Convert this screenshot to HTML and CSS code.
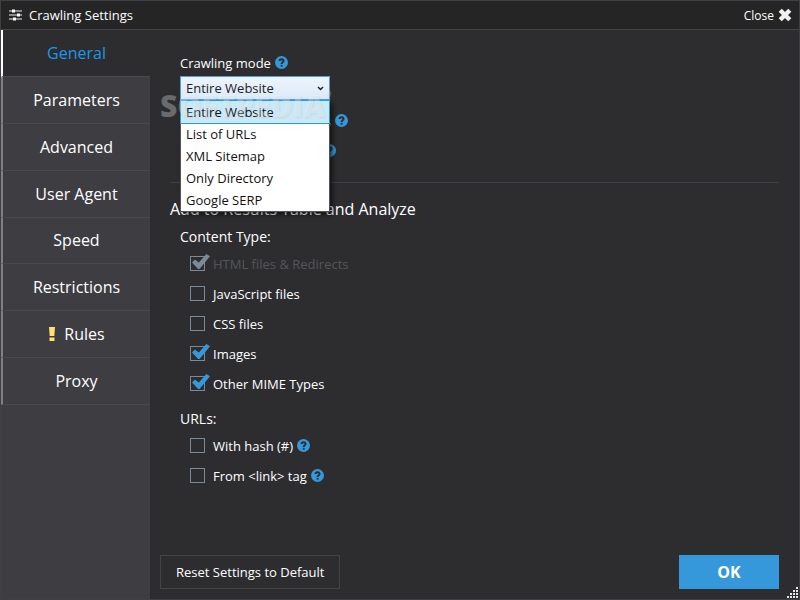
FILE: index.html
```html
<!DOCTYPE html>
<html lang="en">

<head>
  <meta charset="UTF-8">
  <title>Crawling Settings</title>
  <link rel="stylesheet" href="styles.css">
</head>

<body>
<svg class="sprite" aria-hidden="true">
  <symbol id="help" viewBox="0 0 12 12">
    <circle cx="6" cy="6" r="6" fill="#3498db"/>
    <path d="M4.2 4.6C4.2 2.4 7.9 2.4 7.9 4.5C7.9 5.8 6.1 5.7 6.1 7.3" fill="none" stroke="#2d2d30" stroke-width="1.8"/>
    <rect x="5.2" y="8.2" width="1.8" height="1.6" fill="#2d2d30"/>
  </symbol>
</svg>
<div class="window">
  <header class="titlebar">
    <h1>
      <svg width="13" height="12" viewBox="0 0 13 12" aria-hidden="true">
        <path d="M0 2H13M0 6H13M0 10H13" stroke="#eee" stroke-width="1.2"/>
        <path d="M3 .5h3v3h-3zM8 4.5h3v3h-3zM4 8.5h3v3h-3z" fill="#fff"/>
      </svg>
      Crawling Settings
    </h1>
    <button type="button" class="close">
      Close
      <svg width="14" height="14" viewBox="0 0 14 14" aria-hidden="true">
        <path d="M2.2 2.2L11.8 11.8M11.8 2.2L2.2 11.8" stroke="#f1f1f1" stroke-width="4.4"/>
      </svg>
    </button>
  </header>

  <div class="body">
    <nav class="side">
      <ul>
        <li><a href="#general" class="cur">General</a></li>
        <li><a href="#parameters">Parameters</a></li>
        <li><a href="#advanced">Advanced</a></li>
        <li><a href="#user-agent">User Agent</a></li>
        <li><a href="#speed">Speed</a></li>
        <li><a href="#restrictions">Restrictions</a></li>
        <li>
          <a href="#rules">
            <svg width="8" height="14" viewBox="0 0 8 14" aria-hidden="true">
              <path d="M1 0h6l-.7 9h-4.6zM1.5 10.5h5v3.5h-5z" fill="#ffe070"/>
            </svg>
            Rules
          </a>
        </li>
        <li><a href="#proxy">Proxy</a></li>
      </ul>
    </nav>

    <main class="content">
      <section class="mode">
        <div class="mode-title">
          <label for="mode">Crawling mode</label>
          <svg class="help"><use href="#help"/></svg>
        </div>
        <div class="dropdown">
          <select id="mode">
            <option>Entire Website</option>
            <option>List of URLs</option>
            <option>XML Sitemap</option>
            <option>Only Directory</option>
            <option>Google SERP</option>
          </select>
          <svg class="arrow" width="7" height="5" viewBox="0 0 7 5" aria-hidden="true">
            <path d="M1 1L3.5 3.5L6 1" fill="none" stroke="#222" stroke-width="1.5"/>
          </svg>
          <ul class="menu" role="listbox" aria-label="Crawling mode">
            <li role="option" aria-selected="true" class="cur">Entire Website</li>
            <li role="option">List of URLs</li>
            <li role="option">XML Sitemap</li>
            <li role="option">Only Directory</li>
            <li role="option">Google SERP</li>
          </ul>
          <span class="watermark">SOFTPEDIA<sup>®</sup></span>
        </div>
        <div class="checks">
          <div class="row">
            <label><input type="checkbox">Follow Subdomains</label>
            <svg class="help"><use href="#help"/></svg>
          </div>
          <div class="row">
            <label><input type="checkbox">Check Directories</label>
            <svg class="help"><use href="#help"/></svg>
          </div>
        </div>
      </section>

      <section class="results">
        <h2>Add to Results Table and Analyze</h2>
        <h3>Content Type:</h3>
        <div class="checks">
          <div class="row"><label class="off"><input type="checkbox" checked disabled>HTML files &amp; Redirects</label></div>
          <div class="row"><label><input type="checkbox">JavaScript files</label></div>
          <div class="row"><label><input type="checkbox">CSS files</label></div>
          <div class="row"><label><input type="checkbox" checked>Images</label></div>
          <div class="row"><label><input type="checkbox" checked>Other MIME Types</label></div>
        </div>
        <h3>URLs:</h3>
        <div class="checks">
          <div class="row">
            <label><input type="checkbox">With hash (#)</label>
            <svg class="help"><use href="#help"/></svg>
          </div>
          <div class="row">
            <label><input type="checkbox">From &lt;link&gt; tag</label>
            <svg class="help"><use href="#help"/></svg>
          </div>
        </div>
      </section>

      <footer class="actions">
        <button type="button" class="reset">Reset Settings to Default</button>
        <button type="button" class="ok">OK</button>
      </footer>
    </main>
  </div>
  <svg class="grip" width="12" height="12" viewBox="0 0 12 12" aria-hidden="true">
    <path d="M9 0h2v2h-2zM6 3h2v2h-2zM9 3h2v2h-2zM3 6h2v2h-2zM6 6h2v2h-2zM9 6h2v2h-2zM0 9h2v2h-2zM3 9h2v2h-2zM6 9h2v2h-2zM9 9h2v2h-2z" fill="#e6e6ee"/>
  </svg>
</div>
</body>

</html>
```
FILE: styles.css
```css
* {
  box-sizing: border-box;
  padding: 0;
  margin: 0;
}

body,
button,
select {
  font-family: "Open Sans", "Noto Sans", sans-serif;
  font-size: 13px;
  color: #fff;
}

ul {
  list-style: none;
}

button {
  border: 0;
  background: none;
  cursor: pointer;
}

.sprite {
  display: none;
}

.window {
  position: relative;
  display: flex;
  flex-direction: column;
  min-height: 100vh;
  border: 1px solid #3f3f46;
  background-color: #2d2d30;
}

.titlebar {
  display: flex;
  justify-content: space-between;
  align-items: center;
  height: 29px;
  padding: 0 7px 0 8px;
  border-bottom: 1px solid #434346;
  background-color: #252526;
}

.titlebar h1,
.close {
  display: flex;
  align-items: center;
  font-size: 13px;
  font-weight: normal;
}

.titlebar h1 {
  gap: 7px;
}

.close {
  gap: 4px;
  font-size: 12px;
}

.body {
  display: flex;
  flex: 1;
}

.side {
  flex: none;
  width: 149px;
  background-color: #3e3d42;
}

.side ul {
  display: grid;
  grid-auto-rows: 1fr;
  height: 375px;
}

.side li {
  display: grid;
}

.side a {
  display: flex;
  justify-content: center;
  align-items: center;
  gap: 8px;
  border-left: 2px solid #808084;
  border-bottom: 1px solid #4a4a4e;
  font-size: 16px;
  color: #fff;
  text-decoration: none;
}

.side .cur {
  border-left-color: #fff;
  background-color: #2d2d30;
  color: #1c97ea;
}

.content {
  display: flex;
  flex: 1;
  flex-direction: column;
  padding: 24px 20px 10px 20px;
}

.mode {
  padding: 0 10px 16px;
  border-bottom: 1px solid #3f3f46;
}

.mode-title,
.row {
  display: flex;
  align-items: center;
  gap: 4px;
}

.mode-title {
  height: 18px;
  margin-bottom: 4px;
}

.help {
  width: 13px;
  height: 13px;
  margin-bottom: 2px;
}

.dropdown {
  position: relative;
  width: 150px;
  height: 24px;
  margin-bottom: 6px;
}

.dropdown select {
  width: 100%;
  height: 24px;
  padding: 0 5px;
  border: 1px solid #569de5;
  appearance: none;
  background: linear-gradient(#edf4fc, #dbeaf9);
  color: #222;
}

.arrow {
  position: absolute;
  top: 10px;
  right: 6px;
}

.menu {
  position: absolute;
  z-index: 1;
  top: 24px;
  left: 0;
  width: 150px;
  border: 1px solid #555;
  background-color: #fff;
  box-shadow: 3px 3px 4px rgba(0, 0, 0, .5);
  color: #111;
}

.menu li {
  padding: 0 5px;
  line-height: 22px;
}

.menu .cur {
  outline: 1px solid #26a0da;
  background-color: #cbe8f6;
}

.watermark {
  position: absolute;
  z-index: 2;
  top: 10px;
  left: -20px;
  font-size: 30px;
  font-weight: 800;
  line-height: 40px;
  color: rgba(255, 255, 255, .28);
  text-shadow: 1px 1px 2px rgba(90, 110, 130, .1);
  pointer-events: none;
}

.watermark sup {
  font-size: 8px;
  vertical-align: top;
  line-height: 16px;
}

.checks {
  padding-left: 10px;
}

.row {
  height: 30px;
}

.row label {
  display: flex;
  align-items: center;
  gap: 8px;
}

.row input {
  position: relative;
  width: 15px;
  height: 15px;
  margin-bottom: 1px;
  border: 1px solid #7a8a99;
  appearance: none;
}

.row input:checked::after {
  position: absolute;
  top: -3px;
  left: 1px;
  width: 18px;
  height: 15px;
  clip-path: polygon(0 56%, 16% 36%, 38% 56%, 80% 0, 100% 15%, 42% 100%, 34% 100%);
  background-color: #3498db;
  content: "";
}

.row .off {
  color: #555558;
}

.row .off input::after {
  background-color: #7a8a99;
}

.results {
  flex: 1;
  padding: 14px 10px 0;
}

.results .checks {
  padding-bottom: 4px;
}

h2 {
  margin-left: -10px;
  font-size: 16px;
  font-weight: normal;
  line-height: 24px;
}

h3 {
  margin-top: 4px;
  font-size: 14px;
  font-weight: normal;
  line-height: 24px;
}

.actions {
  display: flex;
  justify-content: space-between;
  margin-left: -10px;
}

.reset {
  padding: 0 15px;
  border: 1px solid #434346;
}

.ok {
  width: 100px;
  height: 34px;
  background-color: #3498db;
  font-size: 16px;
  font-weight: bold;
}

.grip {
  position: absolute;
  right: 0;
  bottom: 0;
}
```
